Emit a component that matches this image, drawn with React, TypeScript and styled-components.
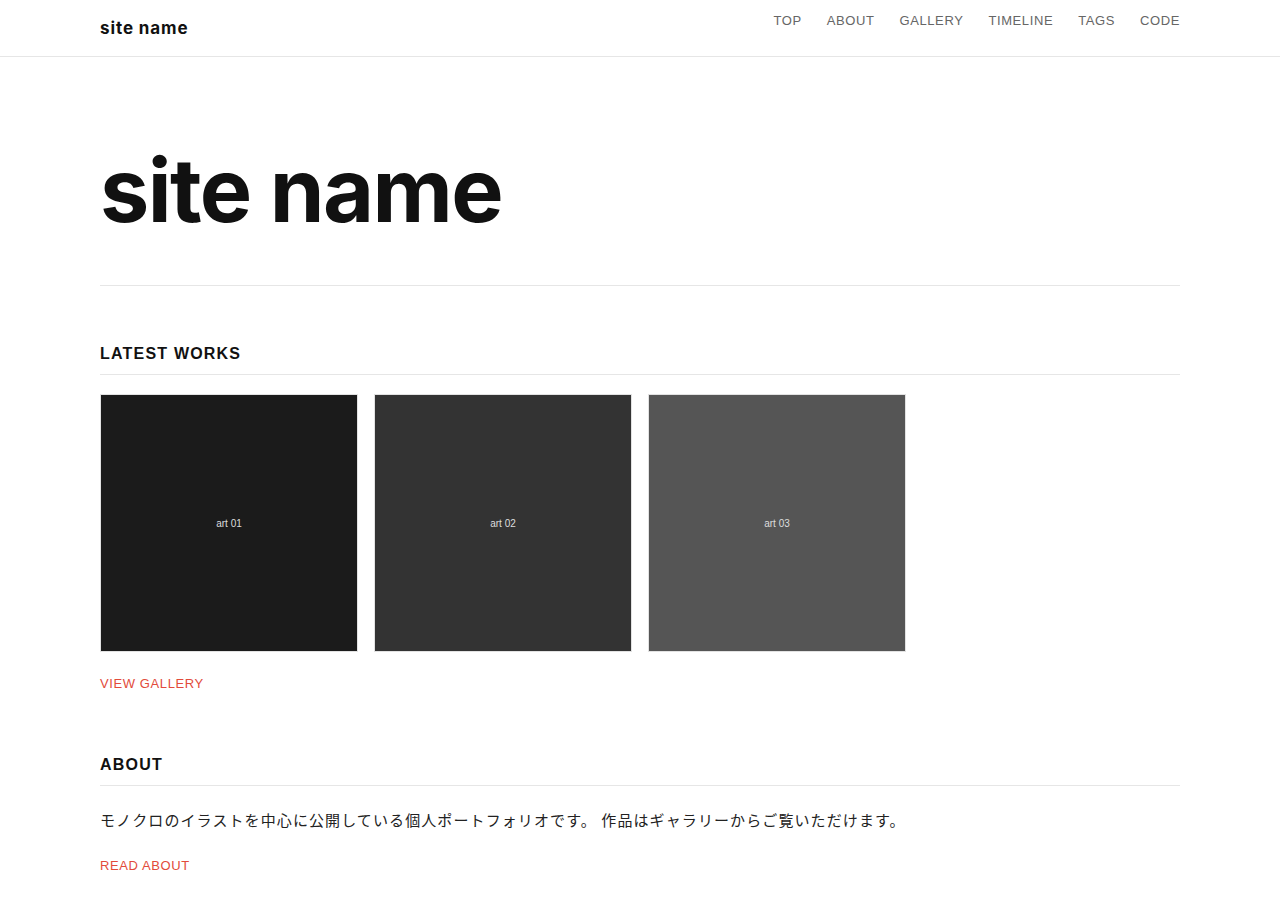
import React from 'react';
import styled, { createGlobalStyle } from 'styled-components';

const works = [
  { label: 'art 01', tone: '#1b1b1b' },
  { label: 'art 02', tone: '#333333' },
  { label: 'art 03', tone: '#555555' },
];

const navItems = ['TOP', 'ABOUT', 'GALLERY', 'TIMELINE', 'TAGS', 'CODE'];

const GlobalStyle = createGlobalStyle`
  html, body {
    margin: 0;
    padding: 0;
    background: #fff;
    color: #111;
    font-family: Inter, 'Noto Sans CJK JP', sans-serif;
  }
  * { box-sizing: border-box; }
`;

const Header = styled.header`
  height: 57px;
  border-bottom: 1px solid #e6e6e6;
`;

const HeaderInner = styled.div`
  width: 1080px;
  margin: 0 auto;
  display: flex;
  justify-content: space-between;
  align-items: flex-start;
`;

const Logo = styled.a`
  font-family: Inter, sans-serif;
  font-weight: 700;
  font-size: 17px;
  color: #111;
  text-decoration: none;
  line-height: 56px;
  letter-spacing: 0.9px;
`;

const Nav = styled.nav`
  display: flex;
  gap: 25px;
  padding-top: 13px;
`;

const NavLink = styled.a`
  font-family: 'Liberation Sans', Arial, sans-serif;
  font-size: 13px;
  letter-spacing: 0.6px;
  color: #666;
  text-decoration: none;
  line-height: 16px;
`;

const Main = styled.main`
  width: 1080px;
  margin: 0 auto;
`;

const Hero = styled.section`
  padding: 83px 0 45px;
  border-bottom: 1px solid #e6e6e6;
`;

const HeroTitle = styled.h1`
  margin: 0;
  font-family: Inter, sans-serif;
  font-weight: 700;
  font-size: 88px;
  line-height: 100px;
  letter-spacing: -1.6px;
  color: #111;
`;

const Section = styled.section<{ $top: number }>`
  padding-top: ${p => p.$top}px;
`;

const SectionTitle = styled.h2`
  margin: 0 0 19px;
  padding-bottom: 10px;
  border-bottom: 1px solid #e6e6e6;
  font-family: 'Liberation Sans', Arial, sans-serif;
  font-weight: 700;
  font-size: 16px;
  line-height: 20px;
  letter-spacing: 1.2px;
  color: #111;
`;

const Grid = styled.div`
  display: flex;
  gap: 16px;
`;

const Tile = styled.div<{ $tone: string }>`
  width: 258px;
  height: 258px;
  border: 1px solid #e2e2e2;
  background: ${p => p.$tone};
  display: flex;
  align-items: center;
  justify-content: center;
  font-family: 'Liberation Sans', Arial, sans-serif;
  font-size: 10px;
  color: #ddd;
`;

const MoreLink = styled.a`
  display: inline-block;
  margin-top: 24px;
  font-family: 'Liberation Sans', Arial, sans-serif;
  font-size: 13px;
  letter-spacing: 0.6px;
  line-height: 16px;
  color: #e24b3b;
  text-decoration: none;
`;

const TextLink = styled(MoreLink)`
  margin-top: 26px;
`;

const Text = styled.p`
  margin: 0;
  padding-top: 3px;
  font-family: 'Noto Sans CJK JP', sans-serif;
  font-size: 15px;
  line-height: 24px;
  letter-spacing: 1.1px;
  color: #222;
`;

const App: React.FC = () => (
  <>
    <GlobalStyle />
    <Header>
      <HeaderInner>
        <Logo href="#">site name</Logo>
        <Nav>
          {navItems.map(item => (
            <NavLink key={item} href="#">{item}</NavLink>
          ))}
        </Nav>
      </HeaderInner>
    </Header>
    <Main>
      <Hero>
        <HeroTitle>site name</HeroTitle>
      </Hero>
      <Section $top={58}>
        <SectionTitle>LATEST WORKS</SectionTitle>
        <Grid>
          {works.map(w => (
            <Tile key={w.label} $tone={w.tone}>{w.label}</Tile>
          ))}
        </Grid>
        <MoreLink href="#">VIEW GALLERY</MoreLink>
      </Section>
      <Section $top={63}>
        <SectionTitle>ABOUT</SectionTitle>
        <Text>モノクロのイラストを中心に公開している個人ポートフォリオです。 作品はギャラリーからご覧いただけます。</Text>
        <TextLink href="#">READ ABOUT</TextLink>
      </Section>
    </Main>
  </>
);

export default App;
